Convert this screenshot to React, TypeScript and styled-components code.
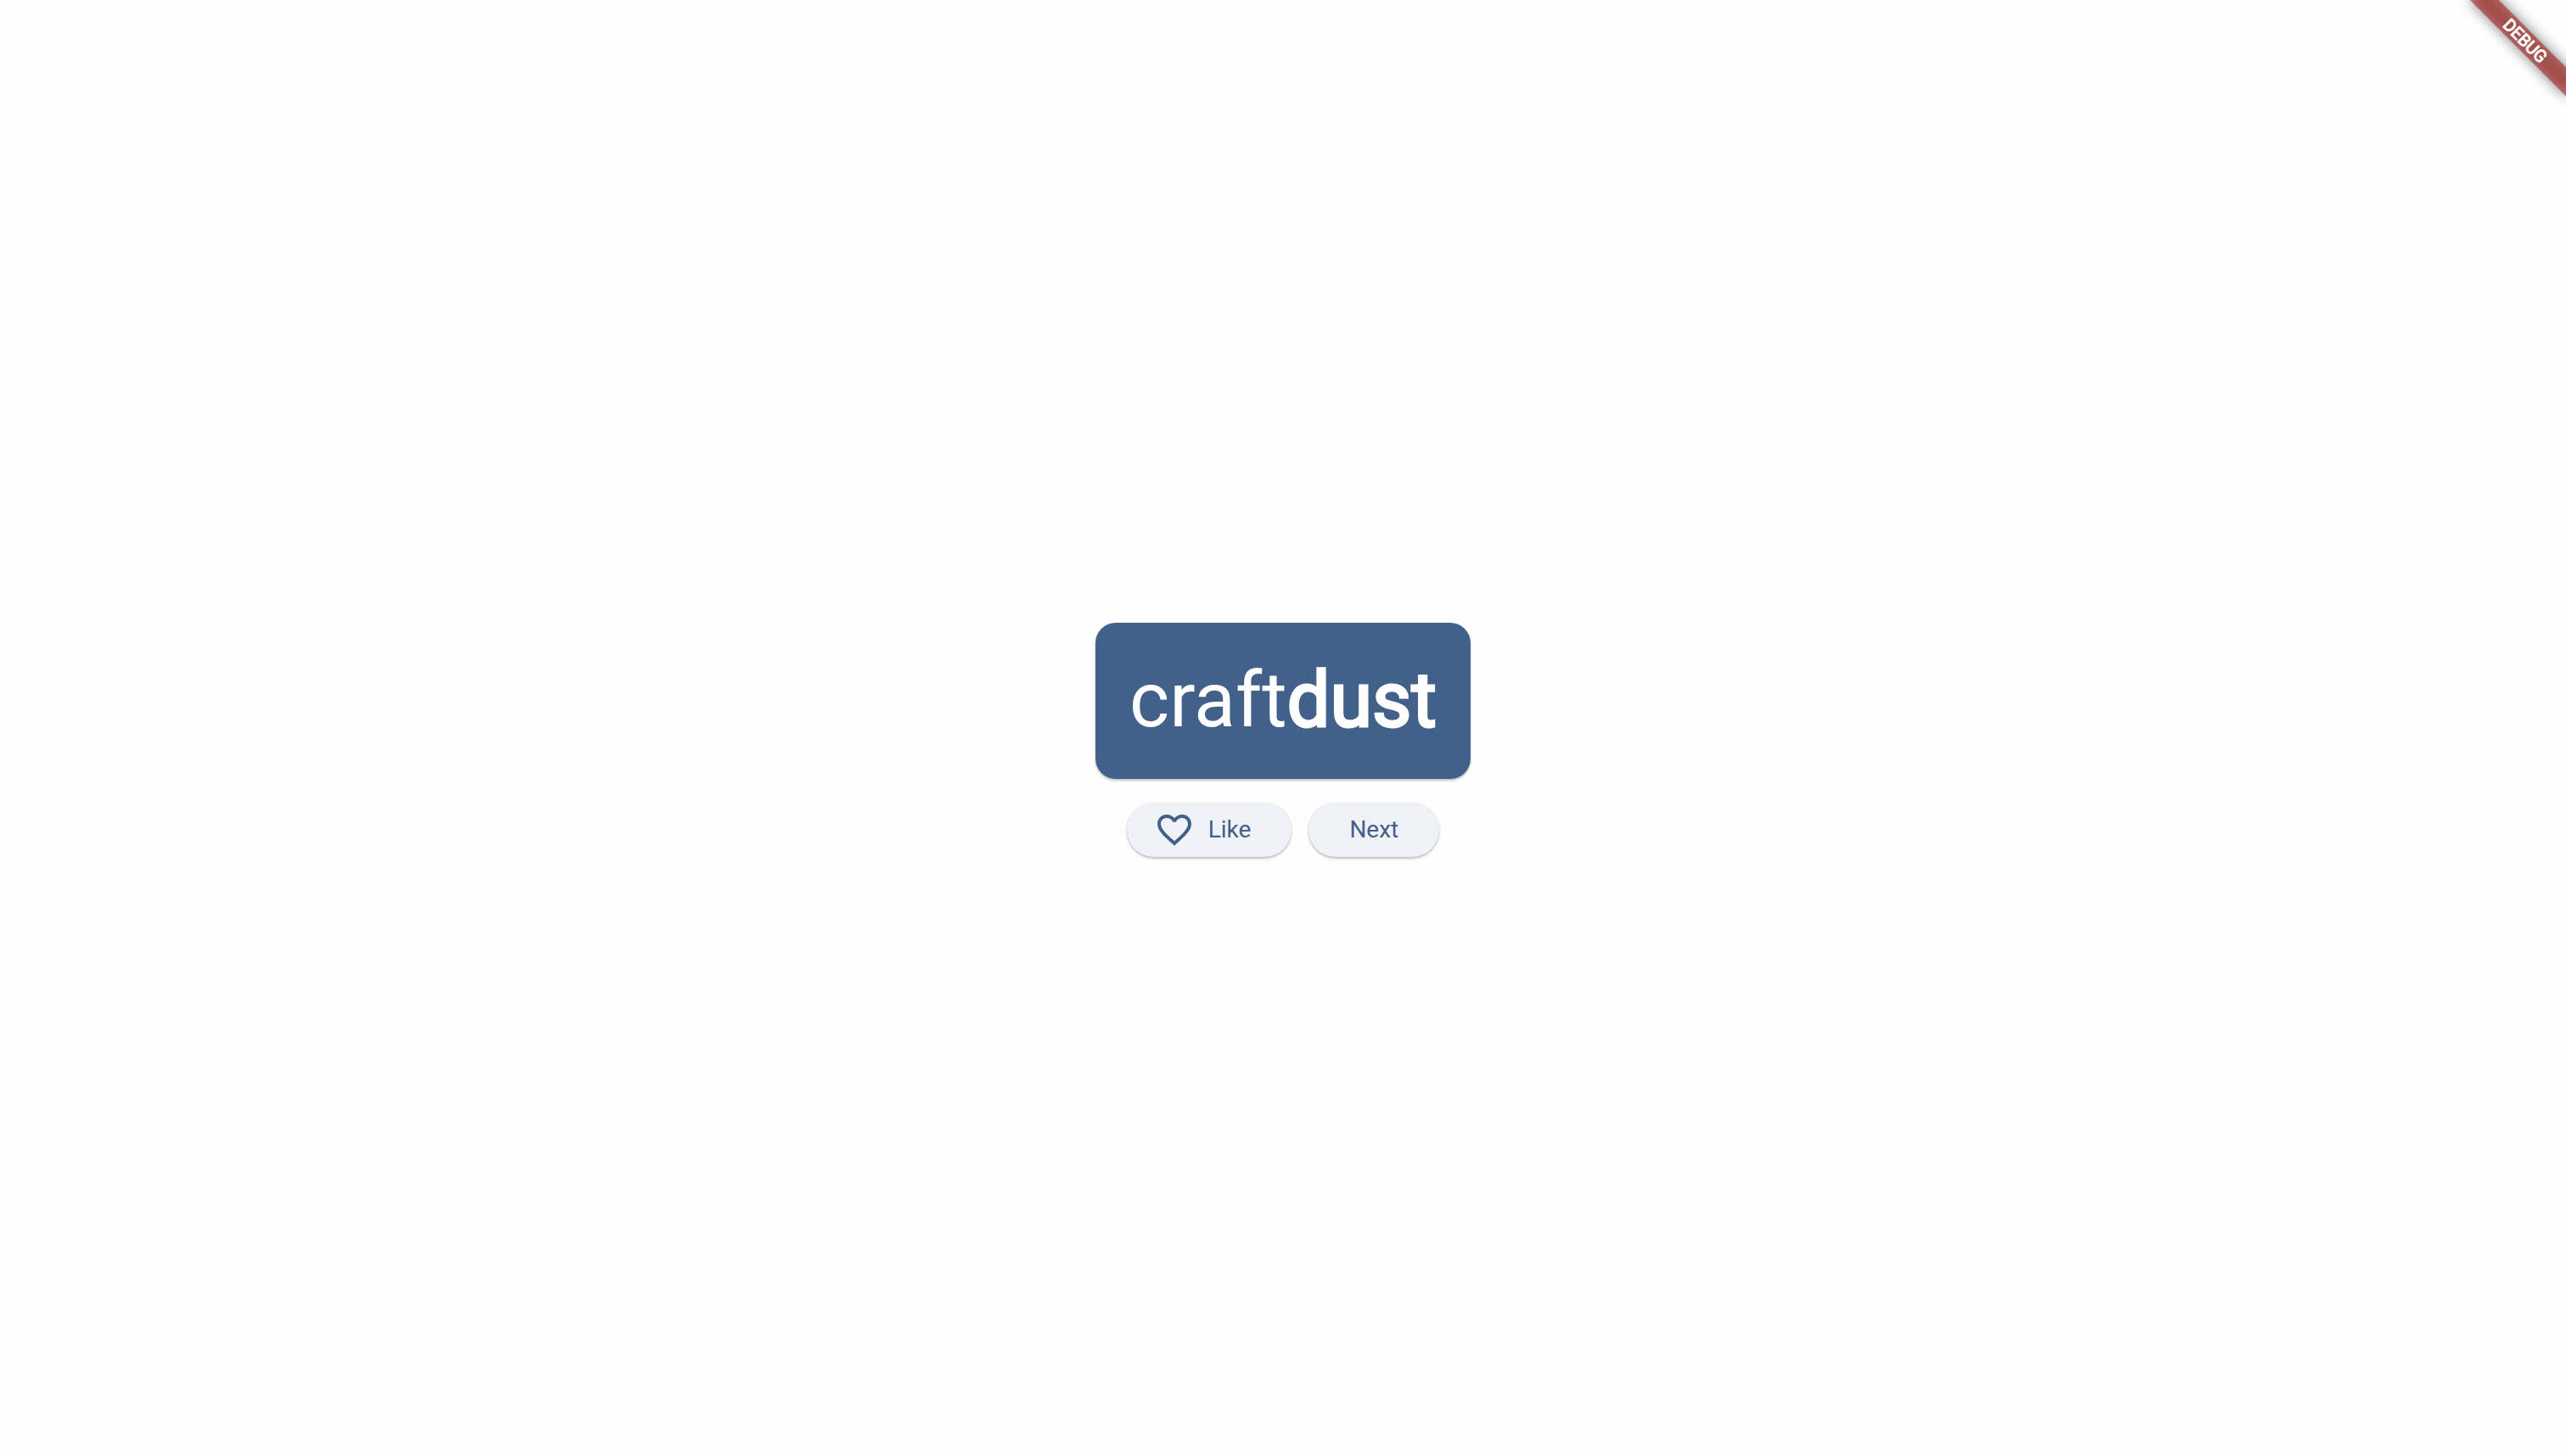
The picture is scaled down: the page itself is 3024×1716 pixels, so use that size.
import React from 'react';
import styled, { createGlobalStyle } from 'styled-components';

const GlobalStyle = createGlobalStyle`
  *, *::before { box-sizing: border-box; }
  body {
    margin: 0;
    background: #fefefe;
    font-family: Roboto, sans-serif;
  }
`;

const Page = styled.main`
  position: relative;
  min-height: 100vh;
  padding-top: 28px;
  display: flex;
  flex-direction: column;
  align-items: center;
  justify-content: center;
  gap: 28px;
  overflow: hidden;
`;

const elevation = '0 2px 3px rgba(0, 0, 0, 0.24), 0 0 2px rgba(0, 0, 0, 0.1)';

const WordCard = styled.h1`
  margin: 0;
  padding: 40px;
  border-radius: 24px;
  background: #41608a;
  box-shadow: ${elevation};
  color: #ffffff;
  font-size: 90px;
  line-height: 104px;
  font-weight: 400;
`;

const SecondWord = styled.span`
  -webkit-text-stroke: 3px currentColor;
`;

const Actions = styled.div`
  display: flex;
  gap: 20px;
`;

const ActionButton = styled.button<{ $withIcon?: boolean }>`
  display: flex;
  align-items: center;
  gap: 16px;
  height: 64px;
  padding: 0 48px 0 ${(p) => (p.$withIcon ? '32px' : '48px')};
  border: 0;
  border-radius: 32px;
  background: #f1f2f8;
  box-shadow: ${elevation};
  color: #41608a;
  font-family: inherit;
  font-size: 28px;
  line-height: 40px;
  font-weight: 400;
  cursor: pointer;
`;

const HeartIcon = styled.svg`
  width: 48px;
  height: 48px;
  fill: currentColor;
`;

const DebugBanner = styled.div`
  position: absolute;
  top: 56px;
  left: calc(100% - 80px);
  width: 160px;
  height: 24px;
  transform: rotate(45deg);
  transform-origin: 80px -56px;
  color: #ffffff;
  font-size: 20px;
  line-height: 24px;
  text-align: center;

  &::before {
    content: '';
    position: absolute;
    inset: 0;
    background: rgba(0, 0, 0, 0.5);
    filter: blur(8px);
  }
`;

const BannerLabel = styled.span`
  position: relative;
  display: block;
  background: rgba(170, 44, 38, 0.63);
  -webkit-text-stroke: 1px currentColor;
`;

export default function App() {
  return (
    <>
      <GlobalStyle />
      <Page>
        <WordCard>
          craft<SecondWord>dust</SecondWord>
        </WordCard>
        <Actions>
          <ActionButton type="button" $withIcon>
            <HeartIcon viewBox="0 0 24 24" aria-hidden="true">
              <path d="M16.5 3c-1.74 0-3.41.81-4.5 2.09C10.91 3.81 9.24 3 7.5 3 4.42 3 2 5.42 2 8.5c0 3.78 3.4 6.86 8.55 11.54L12 21.35l1.45-1.32C18.6 15.36 22 12.28 22 8.5 22 5.42 19.58 3 16.5 3zm-4.4 15.55l-.1.1-.1-.1C7.14 14.24 4 11.39 4 8.5 4 6.5 5.5 5 7.5 5c1.54 0 3.04.99 3.57 2.36h1.87C13.46 5.99 14.96 5 16.5 5c2 0 3.5 1.5 3.5 3.5 0 2.89-3.14 5.74-7.9 10.05z" />
            </HeartIcon>
            Like
          </ActionButton>
          <ActionButton type="button">Next</ActionButton>
        </Actions>
        <DebugBanner>
          <BannerLabel>DEBUG</BannerLabel>
        </DebugBanner>
      </Page>
    </>
  );
}
